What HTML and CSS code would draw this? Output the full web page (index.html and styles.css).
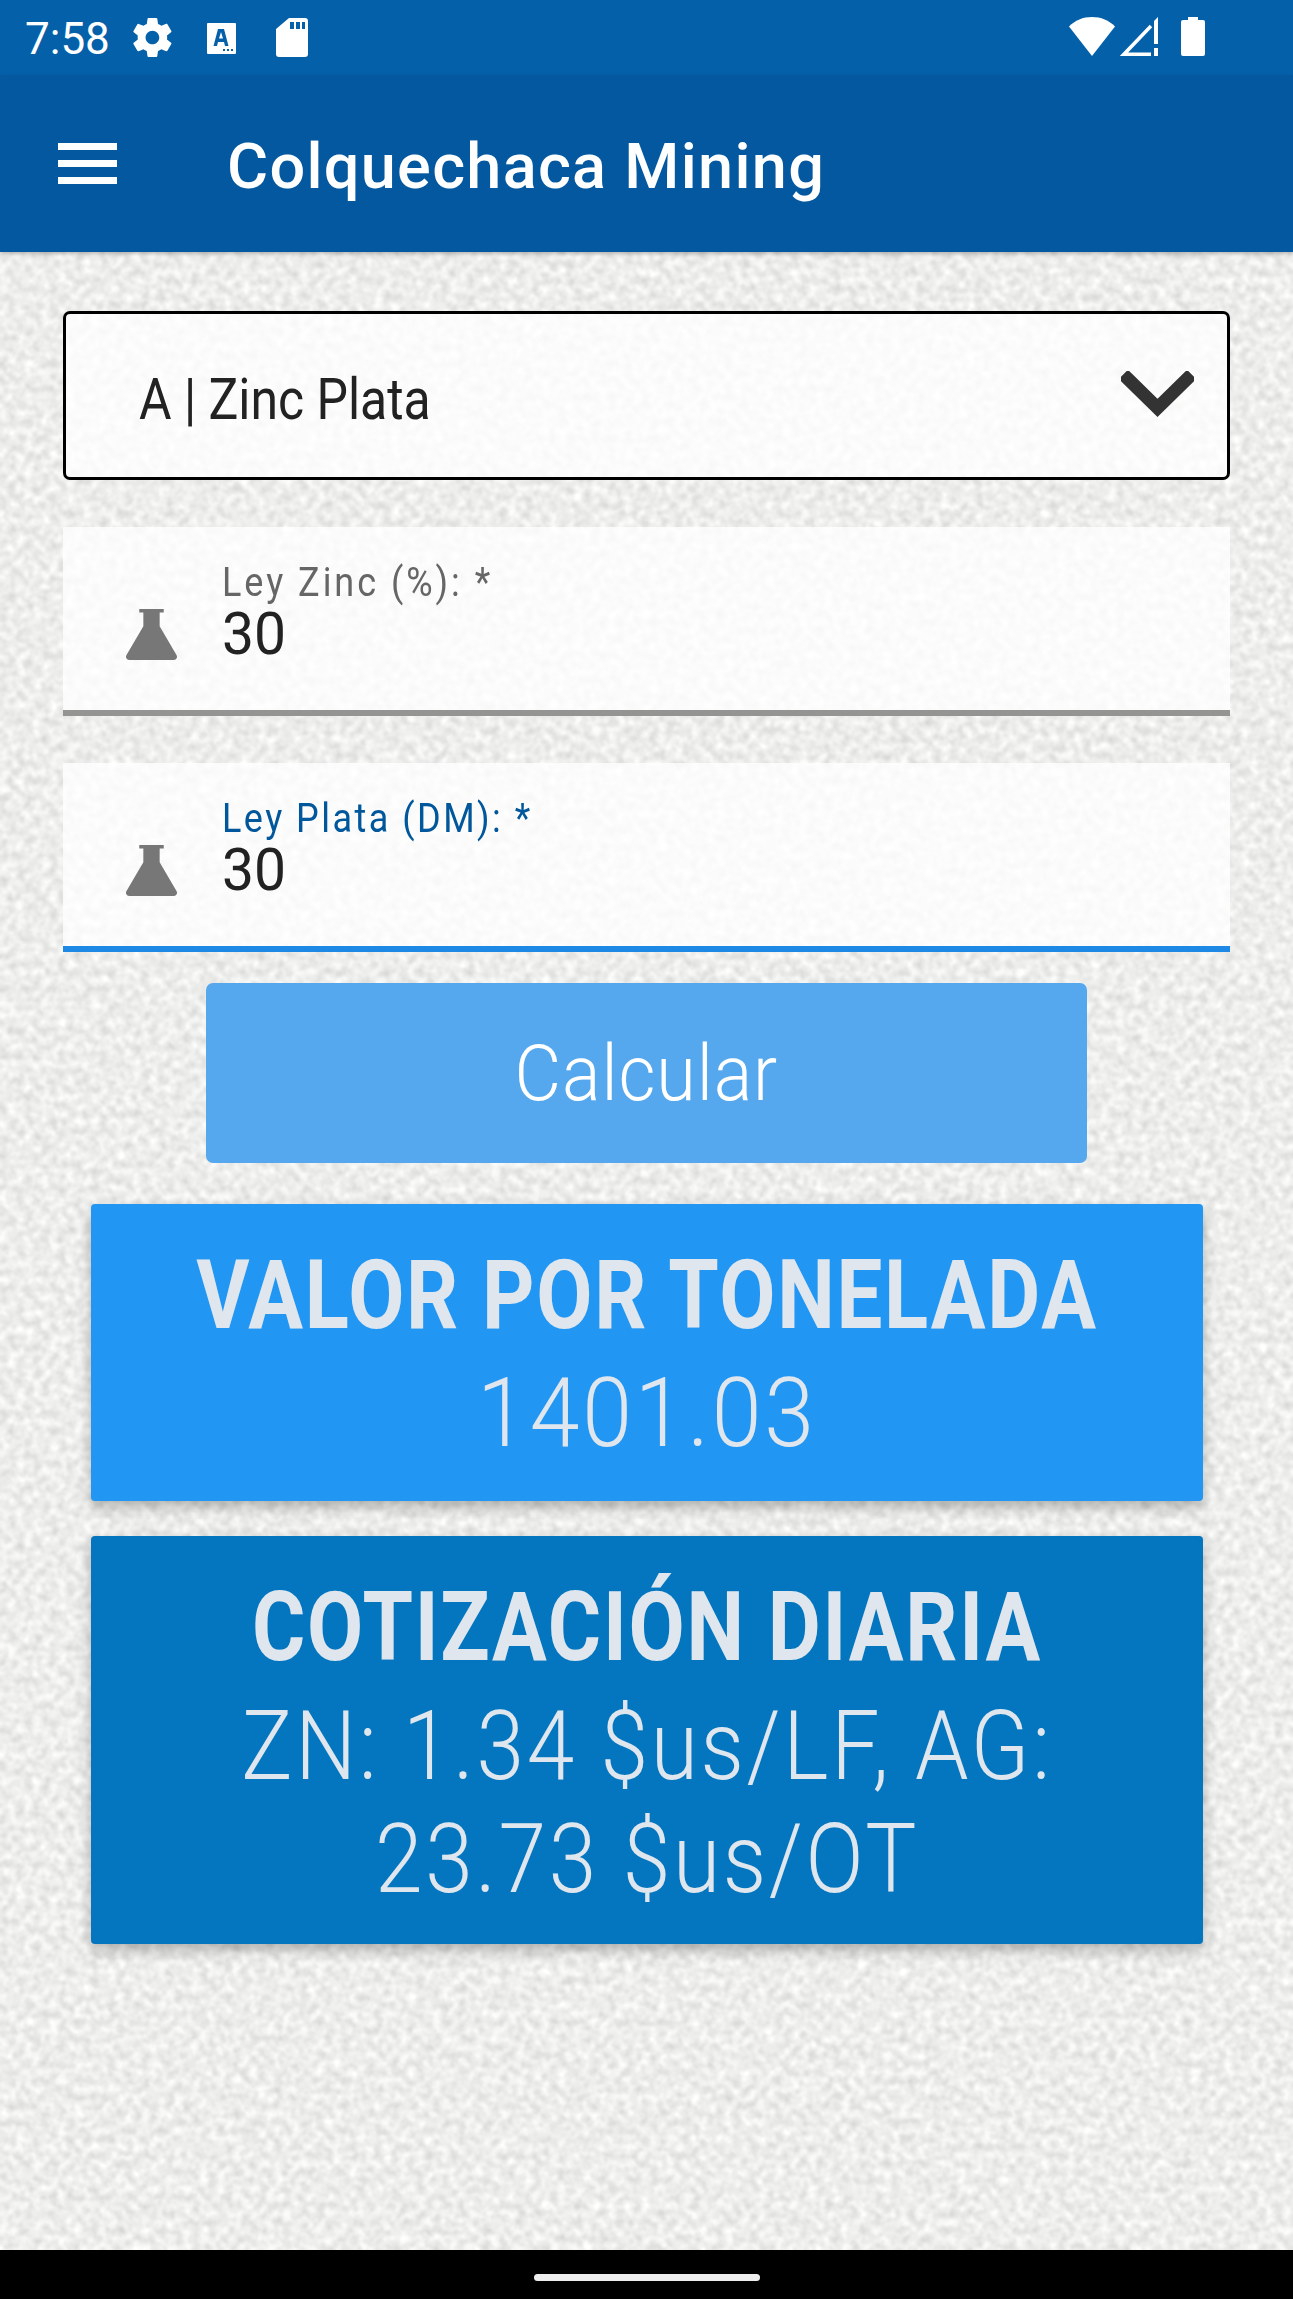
FILE: index.html
```html
<!DOCTYPE html>
<html lang="es">
<head>
<meta charset="utf-8">
<title>Colquechaca Mining</title>
<link rel="stylesheet" href="styles.css">
</head>
<body>
<div class="screen">
  <header class="status">
    <div class="status-left">
      <span class="time">7:58</span>
      <svg class="ic-gear" viewBox="0 0 24 24"><path fill="#fff" d="M19.4 13c.05-.33.08-.66.08-1s-.03-.67-.08-1l2.1-1.65c.2-.15.25-.42.12-.64l-2-3.46c-.12-.22-.39-.3-.61-.22l-2.49 1c-.52-.4-1.08-.73-1.69-.98l-.38-2.65C14.4 2.18 14.2 2 13.96 2h-4c-.25 0-.45.18-.49.42l-.38 2.65c-.61.25-1.17.59-1.69.98l-2.49-1c-.23-.09-.49 0-.61.22l-2 3.46c-.13.22-.07.49.12.64L4.5 11c-.05.33-.08.67-.08 1s.03.67.08 1l-2.1 1.65c-.2.15-.25.42-.12.64l2 3.46c.12.22.39.3.61.22l2.49-1c.52.4 1.08.73 1.69.98l.38 2.65c.04.24.24.42.49.42h4c.25 0 .45-.18.49-.42l.38-2.65c.61-.25 1.17-.59 1.69-.98l2.49 1c.23.09.49 0 .61-.22l2-3.46c.12-.22.07-.49-.12-.64L19.4 13zM11.96 15.5c-1.93 0-3.5-1.57-3.5-3.5s1.57-3.5 3.5-3.5 3.5 1.57 3.5 3.5-1.57 3.5-3.5 3.5z"/></svg>
      <svg class="ic-abox" viewBox="0 0 29 31"><path fill="#fff" fill-rule="evenodd" d="M1 0h27a1 1 0 0 1 1 1v29a1 1 0 0 1-1 1H1a1 1 0 0 1-1-1V1a1 1 0 0 1 1-1zM11 6 6.500 23h3.500l1-4h6l1 4h3.500L17 6zM12 15.500l2-6.500 2 6.500zM16 26v2h2v-2zM20 26v2h2v-2zM24 26v2h2v-2z"/></svg>
      <svg class="ic-sd" viewBox="0 0 32 39"><path fill="#fff" fill-rule="evenodd" d="M13 0h16a3 3 0 0 1 3 3v33a3 3 0 0 1-3 3H3a3 3 0 0 1-3-3V11zM14 4v7h4V4zM20 4v7h4V4zM26 4v7h3V4z"/></svg>
    </div>
    <div class="status-right">
      <svg class="ic-wifi" viewBox="0 0 46 39"><path fill="#fff" d="M23 0C14 0 6 3.300 0 9.500L23 39 46 9.500C40 3.300 32 0 23 0z"/></svg>
      <svg class="ic-signal" viewBox="0 0 38 39"><path fill="none" stroke="#fff" stroke-width="3.500" d="M31 37.200H4L31 9"/><path fill="#fff" d="M38 0v27h-4V4zM34 31h4v8h-4z"/></svg>
      <svg class="ic-batt" viewBox="0 0 24 39"><path fill="#fff" d="M7 0h10v3h5a2 2 0 0 1 2 2v32a2 2 0 0 1-2 2H2a2 2 0 0 1-2-2V5a2 2 0 0 1 2-2h5z"/></svg>
    </div>
  </header>

  <div class="appbar">
    <div class="burger"><span></span><span></span><span></span></div>
    <h1 class="title">Colquechaca Mining</h1>
  </div>

  <main class="content">
    <svg class="grain" aria-hidden="true">
      <filter id="noise" x="0" y="0" width="100%" height="100%" color-interpolation-filters="sRGB">
        <feTurbulence type="fractalNoise" baseFrequency="0.12" numOctaves="4" seed="7"/>
        <feGaussianBlur stdDeviation="0.9"/>
        <feColorMatrix type="matrix" values="0.24 0 0 0 0.81  0.24 0 0 0 0.81  0.24 0 0 0 0.805  0 0 0 0 1"/>
      </filter>
      <rect width="100%" height="100%" filter="url(#noise)"/>
    </svg>

    <div class="select">
      <span class="select-text">A | Zinc Plata</span>
      <svg class="chevron" viewBox="0 0 73 47"><path fill="none" stroke="#333" stroke-width="13" stroke-linecap="square" d="M7 8l29.500 29L66 8"/></svg>
    </div>

    <div class="field">
      <svg class="flask" viewBox="0 0 50 50"><path fill="#777" d="M13 0h24v3.500h-4V17l16.500 28a3.300 3.300 0 0 1-2.500 5H3a3.300 3.300 0 0 1-2.500-5L17 17V3.500h-4z"/></svg>
      <div class="field-body">
        <label class="field-label">Ley Zinc (%): *</label>
        <div class="field-value">30</div>
      </div>
    </div>

    <div class="field field-active">
      <svg class="flask" viewBox="0 0 50 50"><path fill="#777" d="M13 0h24v3.500h-4V17l16.500 28a3.300 3.300 0 0 1-2.500 5H3a3.300 3.300 0 0 1-2.500-5L17 17V3.500h-4z"/></svg>
      <div class="field-body">
        <label class="field-label">Ley Plata (DM): *</label>
        <div class="field-value">30</div>
      </div>
    </div>

    <button class="calc"><span class="calc-text">Calcular</span></button>

    <section class="card card-light">
      <h2 class="card-title">VALOR POR TONELADA</h2>
      <p class="card-text card-text-value">1401.03</p>
    </section>

    <section class="card card-dark">
      <h2 class="card-title">COTIZACIÓN DIARIA</h2>
      <p class="card-text">ZN: 1.34 $us/LF, AG:<br>23.73 $us/OT</p>
    </section>
  </main>

  <footer class="navbar"><span class="pill"></span></footer>
</div>
</body>
</html>
```
FILE: styles.css
```css
* { box-sizing: border-box; }
html, body { margin: 0; padding: 0; }
body { font-family: Roboto, "Liberation Sans", sans-serif; background: #000; }

.screen { width: 1293px; height: 2299px; display: flex; flex-direction: column; overflow: hidden; }

.status { height: 75px; background: #0560aa; display: flex; justify-content: space-between; padding: 17px 88px 0 25px; flex: none; }
.status-left, .status-right { display: flex; align-items: flex-start; }
.time { width: 85px; font-size: 44px; line-height: 44px; color: #fff; white-space: nowrap; }
.ic-gear { width: 47px; height: 47px; margin: -3px 0 0 18.500px; }
.ic-abox { width: 29px; height: 31px; margin: 6px 0 0 31px; }
.ic-sd { width: 32px; height: 39px; margin: 1px 0 0 40px; }
.ic-wifi { width: 46px; height: 39px; }
.ic-signal { width: 38px; height: 39px; margin-left: 5px; }
.ic-batt { width: 24px; height: 39px; margin-left: 23px; }

.appbar { height: 177px; background: #03589f; display: flex; align-items: center; flex: none; box-shadow: 0 2px 4px rgba(0,0,0,.25); position: relative; z-index: 1; }
.burger { width: 59px; margin-left: 58px; display: flex; flex-direction: column; gap: 10px; }
.burger span { display: block; height: 7px; background: #fff; }
.title { margin: 6px 0 0 110px; font-weight: 500; font-size: 63px; line-height: 70px; color: #fff; letter-spacing: 1.300px; }

.content { position: relative; flex: 1; padding: 59px 63px 0; display: flex; flex-direction: column; overflow: hidden; }
.grain { position: absolute; inset: 0; width: 100%; height: 100%; }

.select { position: relative; height: 169px; border: 3px solid #000; border-radius: 7px; background: rgba(255,255,255,.78); display: flex; align-items: center; justify-content: space-between; padding: 0 33px 0 73px; }
.select-text { display: inline-block; font-size: 58px; color: #222; margin-top: 6px; transform: scaleX(.86); transform-origin: left center; white-space: nowrap; }
.chevron { width: 73px; height: 47px; margin-bottom: 3px; }

.field { position: relative; height: 189px; margin-top: 47px; background: rgba(255,255,255,.78); border-bottom: 6px solid #949492; display: flex; padding: 0 0 0 63px; }
.field-active { border-bottom-color: #1e88e5; }
.flask { width: 51px; height: 51px; margin-top: 82px; flex: none; }
.field-body { margin-left: 45px; padding-top: 33px; }
.field-label { display: block; font-size: 40px; line-height: 46px; color: #666; letter-spacing: 3.300px; transform: scaleX(.9); transform-origin: left center; white-space: nowrap; }
.field-active .field-label { color: #01579b; letter-spacing: 2.750px; }
.field-value { font-size: 60px; line-height: 60px; color: #222; margin-top: -2px; transform: scaleX(.95); transform-origin: left center; }

.calc { position: relative; align-self: center; width: 881px; height: 180px; margin-top: 31px; border: 0; border-radius: 7px; background: #55a8ee; color: #fff; font-family: inherit; font-size: 78px; font-weight: 300; letter-spacing: 1px; }
.calc-text { display: inline-block; transform: scaleX(.92); }

.card { position: relative; width: 1112px; align-self: center; border-radius: 4px; text-align: center; color: #dfe6ee; box-shadow: 0 6px 14px rgba(0,0,0,.28); padding-top: 36px; }
.card-light { background: #2196f3; height: 297px; margin-top: 41px; }
.card-dark { background: #0376bf; height: 408px; margin-top: 35px; }
.card-title { margin: 0; font-size: 96px; line-height: 110px; font-weight: 700; letter-spacing: 2px; transform: scaleX(.85); white-space: nowrap; }
.card-text { margin: 8px 0 0; font-size: 96px; line-height: 113px; font-weight: 300; letter-spacing: 3px; transform: scaleX(.893); white-space: nowrap; }
.card-text-value { margin-top: 7px; transform: scaleX(.935); }

.navbar { height: 49px; background: #000; flex: none; display: flex; justify-content: center; padding-top: 24px; }
.pill { width: 226px; height: 7px; border-radius: 4px; background: #eee; }
```
